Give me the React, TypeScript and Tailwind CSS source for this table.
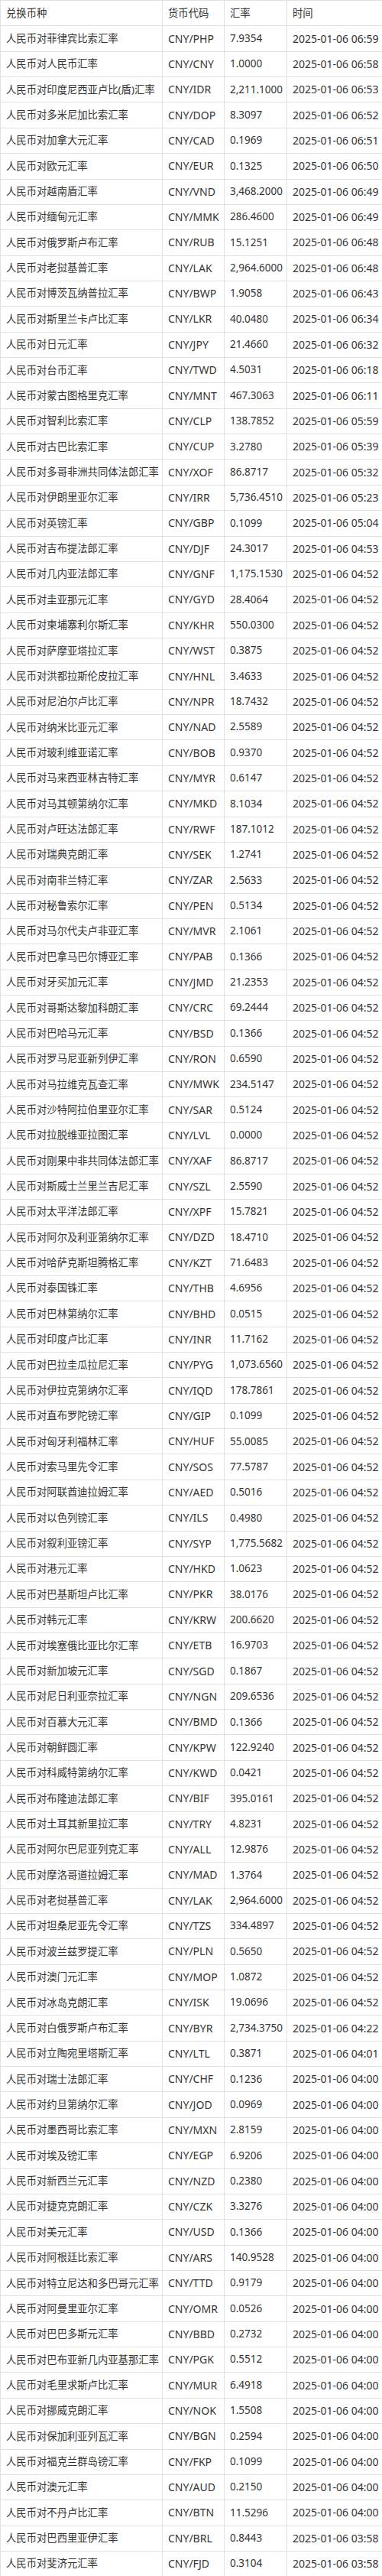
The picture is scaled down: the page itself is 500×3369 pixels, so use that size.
import React from "react";

type Row = [string, string, string, string];

// name, code, rate, time (all on 2025-01-06)
const rows: Row[] = [
  ["菲律宾比索", "PHP", "7.9354", "06:59"],
  ["人民币", "CNY", "1.0000", "06:58"],
  ["印度尼西亚卢比(盾)", "IDR", "2,211.1000", "06:53"],
  ["多米尼加比索", "DOP", "8.3097", "06:52"],
  ["加拿大元", "CAD", "0.1969", "06:51"],
  ["欧元", "EUR", "0.1325", "06:50"],
  ["越南盾", "VND", "3,468.2000", "06:49"],
  ["缅甸元", "MMK", "286.4600", "06:49"],
  ["俄罗斯卢布", "RUB", "15.1251", "06:48"],
  ["老挝基普", "LAK", "2,964.6000", "06:48"],
  ["博茨瓦纳普拉", "BWP", "1.9058", "06:43"],
  ["斯里兰卡卢比", "LKR", "40.0480", "06:34"],
  ["日元", "JPY", "21.4660", "06:32"],
  ["台币", "TWD", "4.5031", "06:18"],
  ["蒙古图格里克", "MNT", "467.3063", "06:11"],
  ["智利比索", "CLP", "138.7852", "05:59"],
  ["古巴比索", "CUP", "3.2780", "05:39"],
  ["多哥非洲共同体法郎", "XOF", "86.8717", "05:32"],
  ["伊朗里亚尔", "IRR", "5,736.4510", "05:23"],
  ["英镑", "GBP", "0.1099", "05:04"],
  ["吉布提法郎", "DJF", "24.3017", "04:53"],
  ["几内亚法郎", "GNF", "1,175.1530", "04:52"],
  ["圭亚那元", "GYD", "28.4064", "04:52"],
  ["柬埔寨利尔斯", "KHR", "550.0300", "04:52"],
  ["萨摩亚塔拉", "WST", "0.3875", "04:52"],
  ["洪都拉斯伦皮拉", "HNL", "3.4633", "04:52"],
  ["尼泊尔卢比", "NPR", "18.7432", "04:52"],
  ["纳米比亚元", "NAD", "2.5589", "04:52"],
  ["玻利维亚诺", "BOB", "0.9370", "04:52"],
  ["马来西亚林吉特", "MYR", "0.6147", "04:52"],
  ["马其顿第纳尔", "MKD", "8.1034", "04:52"],
  ["卢旺达法郎", "RWF", "187.1012", "04:52"],
  ["瑞典克朗", "SEK", "1.2741", "04:52"],
  ["南非兰特", "ZAR", "2.5633", "04:52"],
  ["秘鲁索尔", "PEN", "0.5134", "04:52"],
  ["马尔代夫卢非亚", "MVR", "2.1061", "04:52"],
  ["巴拿马巴尔博亚", "PAB", "0.1366", "04:52"],
  ["牙买加元", "JMD", "21.2353", "04:52"],
  ["哥斯达黎加科朗", "CRC", "69.2444", "04:52"],
  ["巴哈马元", "BSD", "0.1366", "04:52"],
  ["罗马尼亚新列伊", "RON", "0.6590", "04:52"],
  ["马拉维克瓦查", "MWK", "234.5147", "04:52"],
  ["沙特阿拉伯里亚尔", "SAR", "0.5124", "04:52"],
  ["拉脱维亚拉图", "LVL", "0.0000", "04:52"],
  ["刚果中非共同体法郎", "XAF", "86.8717", "04:52"],
  ["斯威士兰里兰吉尼", "SZL", "2.5590", "04:52"],
  ["太平洋法郎", "XPF", "15.7821", "04:52"],
  ["阿尔及利亚第纳尔", "DZD", "18.4710", "04:52"],
  ["哈萨克斯坦腾格", "KZT", "71.6483", "04:52"],
  ["泰国铢", "THB", "4.6956", "04:52"],
  ["巴林第纳尔", "BHD", "0.0515", "04:52"],
  ["印度卢比", "INR", "11.7162", "04:52"],
  ["巴拉圭瓜拉尼", "PYG", "1,073.6560", "04:52"],
  ["伊拉克第纳尔", "IQD", "178.7861", "04:52"],
  ["直布罗陀镑", "GIP", "0.1099", "04:52"],
  ["匈牙利福林", "HUF", "55.0085", "04:52"],
  ["索马里先令", "SOS", "77.5787", "04:52"],
  ["阿联酋迪拉姆", "AED", "0.5016", "04:52"],
  ["以色列镑", "ILS", "0.4980", "04:52"],
  ["叙利亚镑", "SYP", "1,775.5682", "04:52"],
  ["港元", "HKD", "1.0623", "04:52"],
  ["巴基斯坦卢比", "PKR", "38.0176", "04:52"],
  ["韩元", "KRW", "200.6620", "04:52"],
  ["埃塞俄比亚比尔", "ETB", "16.9703", "04:52"],
  ["新加坡元", "SGD", "0.1867", "04:52"],
  ["尼日利亚奈拉", "NGN", "209.6536", "04:52"],
  ["百慕大元", "BMD", "0.1366", "04:52"],
  ["朝鲜圆", "KPW", "122.9240", "04:52"],
  ["科威特第纳尔", "KWD", "0.0421", "04:52"],
  ["布隆迪法郎", "BIF", "395.0161", "04:52"],
  ["土耳其新里拉", "TRY", "4.8231", "04:52"],
  ["阿尔巴尼亚列克", "ALL", "12.9876", "04:52"],
  ["摩洛哥道拉姆", "MAD", "1.3764", "04:52"],
  ["老挝基普", "LAK", "2,964.6000", "04:52"],
  ["坦桑尼亚先令", "TZS", "334.4897", "04:52"],
  ["波兰兹罗提", "PLN", "0.5650", "04:52"],
  ["澳门元", "MOP", "1.0872", "04:52"],
  ["冰岛克朗", "ISK", "19.0696", "04:52"],
  ["白俄罗斯卢布", "BYR", "2,734.3750", "04:22"],
  ["立陶宛里塔斯", "LTL", "0.3871", "04:01"],
  ["瑞士法郎", "CHF", "0.1236", "04:00"],
  ["约旦第纳尔", "JOD", "0.0969", "04:00"],
  ["墨西哥比索", "MXN", "2.8159", "04:00"],
  ["埃及镑", "EGP", "6.9206", "04:00"],
  ["新西兰元", "NZD", "0.2380", "04:00"],
  ["捷克克朗", "CZK", "3.3276", "04:00"],
  ["美元", "USD", "0.1366", "04:00"],
  ["阿根廷比索", "ARS", "140.9528", "04:00"],
  ["特立尼达和多巴哥元", "TTD", "0.9179", "04:00"],
  ["阿曼里亚尔", "OMR", "0.0526", "04:00"],
  ["巴巴多斯元", "BBD", "0.2732", "04:00"],
  ["巴布亚新几内亚基那", "PGK", "0.5512", "04:00"],
  ["毛里求斯卢比", "MUR", "6.4918", "04:00"],
  ["挪威克朗", "NOK", "1.5508", "04:00"],
  ["保加利亚列瓦", "BGN", "0.2594", "04:00"],
  ["福克兰群岛镑", "FKP", "0.1099", "04:00"],
  ["澳元", "AUD", "0.2150", "04:00"],
  ["不丹卢比", "BTN", "11.5296", "04:00"],
  ["巴西里亚伊", "BRL", "0.8443", "03:58"],
  ["斐济元", "FJD", "0.3104", "03:58"],
];

const rowCls =
  "grid grid-cols-[212px_81px_82px_125px] h-[33.36px] border-b border-[#e1e1e1]";
const cellCls =
  "flex items-center pl-[7px] pr-[3px] whitespace-nowrap overflow-hidden border-r border-[#e1e1e1]";
// latin columns read a touch wider than the cjk one
const dataSizes = ["text-[13.33px]", "text-[14px]", "text-[13.5px]", "text-[14px]"];

function Line({ cells, header }: { cells: string[]; header?: boolean }) {
  return (
    <div className={rowCls}>
      {cells.map((c, i) => (
        <div key={i} className={`${cellCls} ${header ? "text-[13.33px]" : dataSizes[i]}`}>
          {c}
        </div>
      ))}
    </div>
  );
}

export default function App() {
  return (
    <div
      className="w-[500px] bg-white text-[#333333] leading-none"
      style={{ fontFamily: '"Noto Sans", "Noto Sans CJK SC", sans-serif' }}
    >
      <div className="border-l border-t border-[#e1e1e1]">
        <Line header cells={["兑换币种", "货币代码", "汇率", "时间"]} />
        {rows.map(([name, code, rate, time], idx) => (
          <Line
            key={idx}
            cells={[
              `人民币对${name}汇率`,
              `CNY/${code}`,
              rate,
              `2025-01-06 ${time}`,
            ]}
          />
        ))}
      </div>
    </div>
  );
}
